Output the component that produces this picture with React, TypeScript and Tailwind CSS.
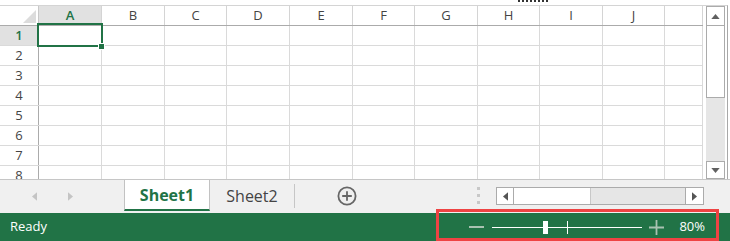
import React from "react";

const cols = [
  { label: "A", w: "w-[63px]" },
  { label: "B", w: "w-[63px]" },
  { label: "C", w: "w-[62px]" },
  { label: "D", w: "w-[63px]" },
  { label: "E", w: "w-[63px]" },
  { label: "F", w: "w-[62px]" },
  { label: "G", w: "w-[63px]" },
  { label: "H", w: "w-[62px]" },
  { label: "I", w: "w-[63px]" },
  { label: "J", w: "w-[62px]" },
  { label: "", w: "w-[38px]" },
];

const rows = [1, 2, 3, 4, 5, 6, 7, 8];

function Tri({ dir, className }: { dir: "up" | "down" | "left" | "right"; className: string }) {
  const pts = {
    up: "0,6 5,0 10,6",
    down: "0,0 10,0 5,6",
    left: "6,0 6,10 0,5",
    right: "0,0 6,5 0,10",
  }[dir];
  const vb = dir === "up" || dir === "down" ? "0 0 10 6" : "0 0 6 10";
  return (
    <svg viewBox={vb} className={className}>
      <polygon points={pts} fill="currentColor" />
    </svg>
  );
}

function Grid() {
  return (
    <div className="relative w-[703px] h-[174px] overflow-hidden border-t border-[#d4d4d4]">
      {/* column headers */}
      <div className="flex h-[20px] border-b border-[#ababab]">
        <div className="relative w-[39px] h-full border-r border-[#c8c8c8]">
          <svg viewBox="0 0 14 14" className="absolute right-[2px] bottom-[2px] w-[13px] h-[13px]">
            <polygon points="14,0 14,14 0,14" fill="#dcdcdc" />
          </svg>
        </div>
        {cols.map((c, i) => (
          <div
            key={i}
            className={`${c.w} h-full border-r border-[#d4d4d4] flex items-center justify-center text-[13px] ${
              i === 0 ? "bg-[#e1e1e1] text-[#217346] font-semibold" : "text-[#444]"
            }`}
          >
            {c.label}
          </div>
        ))}
      </div>
      {rows.map((r) => (
        <div key={r} className="flex h-[20px] border-b border-[#dadada]">
          <div
            className={`w-[39px] h-full border-r border-[#ababab] flex items-center justify-center text-[13px] ${
              r === 1 ? "bg-[#e1e1e1] text-[#217346] font-semibold" : "text-[#444]"
            }`}
          >
            {r}
          </div>
          {cols.map((c, i) => (
            <div key={i} className={`${c.w} h-full border-r border-[#dadada]`} />
          ))}
        </div>
      ))}
      {/* active cell */}
      <div className="absolute left-[37px] top-[17px] w-[66px] h-[24px] border-2 border-[#217346]" />
      <div className="absolute left-[98px] top-[37px] w-[7px] h-[7px] bg-[#217346] border border-white" />
    </div>
  );
}

function VScroll() {
  return (
    <div className="w-[25px] h-[174px] border-t border-r border-[#d4d4d4] border-r-[#a8a8a8] flex flex-col pl-[3px]">
      <div className="w-[19px] h-[20px] bg-white border border-[#ababab] flex items-center justify-center text-[#606060]">
        <Tri dir="up" className="w-[9px] h-[5px]" />
      </div>
      <div className="w-[19px] flex-1 bg-[#e6e6e6] flex flex-col">
        <div className="h-[72px] bg-white border border-t-0 border-[#ababab]" />
      </div>
      <div className="w-[19px] h-[18px] bg-white border border-[#ababab] flex items-center justify-center text-[#606060]">
        <Tri dir="down" className="w-[9px] h-[5px]" />
      </div>
    </div>
  );
}

function TabBar() {
  return (
    <div className="flex h-[34px] bg-[#f0f0f0] border-t border-[#c6c6c6] pr-[3px] border-r-0">
      <div className="w-[124px] flex items-center text-[#c4c4c4]">
        <Tri dir="left" className="ml-[32px] w-[5px] h-[9px]" />
        <Tri dir="right" className="ml-[31px] w-[5px] h-[9px]" />
      </div>
      <div className="w-[86px] h-[31px] bg-white border-x border-[#c2c2c2] border-b-2 border-b-[#217346] flex items-center justify-center text-[16px] font-bold text-[#217346]">
        Sheet1
      </div>
      <div className="w-[84px] h-[31px] flex items-center justify-center text-[16px] text-[#444]">
        Sheet2
      </div>
      <div className="w-px h-[24px] mt-[4px] bg-[#c6c6c6]" />
      <div className="ml-[42px] h-[31px] flex items-center">
        <svg viewBox="0 0 20 20" className="w-[20px] h-[20px]">
          <circle cx="10" cy="10" r="8.6" fill="none" stroke="#666" strokeWidth="1.8" />
          <path d="M10 5.2V14.8M5.2 10H14.8" stroke="#666" strokeWidth="1.8" />
        </svg>
      </div>
      <div className="ml-[120px] h-[31px] flex flex-col justify-center gap-[4px]">
        <div className="w-[3px] h-[3px] bg-[#c8c8c8]" />
        <div className="w-[3px] h-[3px] bg-[#c8c8c8]" />
        <div className="w-[3px] h-[3px] bg-[#c8c8c8]" />
      </div>
      <div className="ml-[16px] mt-[7px] w-[208px] h-[18px] flex bg-[#e6e6e6] border border-[#ababab]">
        <div className="w-[17px] h-full bg-white border-r border-[#ababab] flex items-center justify-center text-[#555]">
          <Tri dir="left" className="w-[5px] h-[9px]" />
        </div>
        <div className="w-[77px] h-full bg-white border-r border-[#c8c8c8]" />
        <div className="flex-1" />
        <div className="w-[18px] h-full bg-white border-l border-[#ababab] flex items-center justify-center text-[#555]">
          <Tri dir="right" className="w-[5px] h-[9px]" />
        </div>
      </div>
    </div>
  );
}

function StatusBar() {
  return (
    <div className="flex items-center h-[28px] bg-[#217346] text-white text-[13px]">
      <span className="ml-[10px]">Ready</span>
      <div className="flex-1" />
      <div className="w-[15px] h-[2px] bg-[#a9c2b1]" />
      <div className="relative ml-[8px] w-[150px] h-[13px] flex items-center">
        <div className="w-full h-px bg-white" />
        <div className="absolute left-[51px] top-0 w-[5px] h-[13px] bg-white" />
        <div className="absolute left-[75px] top-0 w-px h-[13px] bg-white" />
      </div>
      <svg viewBox="0 0 15 15" className="ml-[7px] w-[15px] h-[15px]">
        <path d="M7.5 0V15M0 7.5H15" stroke="#a9c2b1" strokeWidth="1.8" />
      </svg>
      <span className="ml-[15px] mr-[25px]">80%</span>
    </div>
  );
}

export default function App() {
  return (
    <div
      className="relative w-[730px] h-[241px] overflow-hidden bg-white"
      style={{ fontFamily: '"Open Sans", "Noto Sans", Arial, sans-serif' }}
    >
      <div className="h-[5px]">
        <div className="ml-[518px] w-[30px] border-t-2 border-dotted border-[#333]" />
      </div>
      <div className="flex">
        <Grid />
        <VScroll />
      </div>
      <TabBar />
      <StatusBar />
      <div className="absolute left-[436px] top-[209px] w-[283px] h-[32px] border-[3px] border-[#ee4343]" />
    </div>
  );
}
